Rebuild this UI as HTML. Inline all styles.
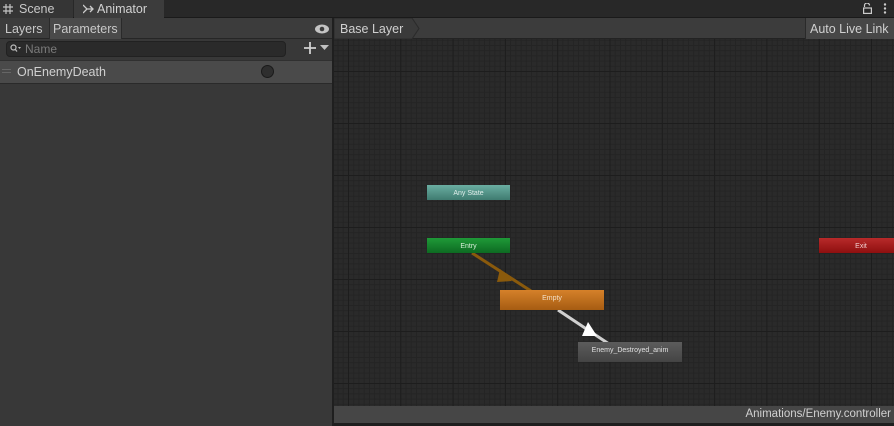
<!DOCTYPE html>
<html><head><style>
*{margin:0;padding:0;box-sizing:border-box}
body{width:894px;height:426px;background:#191919;font-family:"Liberation Sans",sans-serif;color:#c4c4c4;position:relative;overflow:hidden;font-size:12px}
.abs{position:absolute;white-space:nowrap}
</style></head><body>
<div class="abs" style="left:0;top:0;width:894px;height:18px;background:#282828;border-bottom:1px solid #1a1a1a"></div>
<div class="abs" style="left:0;top:0;width:73px;height:18px;background:#353535;"></div>
<svg class="abs" style="left:3px;top:4px" width="10" height="10"><path d="M3 0V10M7 0V10M0 3H10M0 7H10" stroke="#c4c4c4" stroke-width="1.2"/></svg>
<div class="abs" style="left:19px;top:2px;font-size:12.5px;color:#c8c8c8">Scene</div>
<div class="abs" style="left:74px;top:0;width:90px;height:18px;background:#3c3c3c"></div>
<svg class="abs" style="left:83px;top:4px" width="11" height="10"><path d="M0 1L4 5L0 9M4 5H10M7 2L10 5L7 8" stroke="#ccc" stroke-width="1.3" fill="none"/></svg>
<div class="abs" style="left:97px;top:2px;font-size:12.5px;color:#d2d2d2">Animator</div>
<svg class="abs" style="left:863px;top:3px" width="9" height="11"><path d="M1.5 4V2.5A2.5 2.5 0 0 1 6.5 2.5" stroke="#ccc" stroke-width="1.2" fill="none"/><rect x="0.6" y="5" width="7.8" height="5.4" stroke="#ccc" stroke-width="1.2" fill="none"/></svg>
<svg class="abs" style="left:883px;top:3px" width="4" height="12"><circle cx="2" cy="1.5" r="1.2" fill="#ccc"/><circle cx="2" cy="5.5" r="1.2" fill="#ccc"/><circle cx="2" cy="9.5" r="1.2" fill="#ccc"/></svg>
<div class="abs" style="left:0;top:18px;width:333px;height:408px;background:#383838"></div>
<div class="abs" style="left:0;top:18px;width:333px;height:21px;background:#3c3c3c;border-bottom:1px solid #262626"></div>
<div class="abs" style="left:5px;top:22px;font-size:12.5px;color:#c8c8c8">Layers</div>
<div class="abs" style="left:49px;top:18px;width:73px;height:21px;background:#4a4a4a;border-left:1px solid #2a2a2a;border-right:1px solid #2a2a2a"></div>
<div class="abs" style="left:53px;top:22px;font-size:12.5px;color:#c8c8c8">Parameters</div>
<svg class="abs" style="left:314px;top:23px" width="16" height="12"><ellipse cx="8" cy="6" rx="7" ry="4.5" fill="#c4c4c4"/><circle cx="8" cy="6" r="2.3" fill="#3c3c3c"/></svg>
<div class="abs" style="left:6px;top:41px;width:280px;height:16px;background:#2a2a2a;border:1px solid #212121;border-radius:4px"></div>
<svg class="abs" style="left:10px;top:44px" width="12" height="9"><circle cx="3.5" cy="3.5" r="2.5" stroke="#bbb" stroke-width="1.2" fill="none"/><path d="M5 5L7 7.5" stroke="#bbb" stroke-width="1.3"/><path d="M8 3H11L9.5 5Z" fill="#bbb"/></svg>
<div class="abs" style="left:25px;top:42px;font-size:12px;color:#7a7a7a">Name</div>
<svg class="abs" style="left:304px;top:42px" width="12" height="12"><path d="M6 0V12M0 6H12" stroke="#d0d0d0" stroke-width="1.8"/></svg>
<svg class="abs" style="left:320px;top:45px" width="9" height="6"><path d="M0 0H9L4.5 5Z" fill="#c0c0c0"/></svg>
<div class="abs" style="left:0;top:60px;width:333px;height:24px;background:#4a4a4a;border-top:1px solid #303030;border-bottom:1px solid #2a2a2a"></div>
<div class="abs" style="left:2px;top:69px;width:9px;height:1px;background:#666"></div>
<div class="abs" style="left:2px;top:72px;width:9px;height:1px;background:#666"></div>
<div class="abs" style="left:17px;top:65px;font-size:12.5px;color:#d0d0d0">OnEnemyDeath</div>
<div class="abs" style="left:261px;top:65px;width:13px;height:13px;border-radius:50%;background:#2e2e2e;border:1px solid #1a1a1a"></div>
<div class="abs" style="left:332px;top:18px;width:2px;height:408px;background:#1f1f1f"></div>
<div class="abs" style="left:334px;top:18px;width:560px;height:21px;background:#3c3c3c;border-bottom:1px solid #232323"></div>
<svg class="abs" style="left:334px;top:18px" width="90" height="21"><polygon points="0,0 78,0 85,10.5 78,21 0,21" fill="#3a3a3a" stroke="#2a2a2a"/></svg>
<div class="abs" style="left:340px;top:22px;font-size:12.5px;color:#d0d0d0">Base Layer</div>
<div class="abs" style="left:805px;top:18px;width:89px;height:21px;background:#474747;border-left:1px solid #2a2a2a"></div>
<div class="abs" style="left:810px;top:22px;font-size:12.5px;color:#d0d0d0">Auto Live Link</div>
<svg class="abs" style="left:334px;top:39px" width="560" height="367">
<defs>
<pattern id="mn" width="5.23" height="5.2" patternUnits="userSpaceOnUse" x="14" y="32"><path d="M0 0.5H5.23M0.5 0V5.2" stroke="#242424" stroke-width="1" fill="none"/></pattern>
<pattern id="mj" width="52.3" height="52" patternUnits="userSpaceOnUse" x="14" y="32"><path d="M0 0.5H52.3M0.5 0V52" stroke="#1d1d1d" stroke-width="1" fill="none"/></pattern>
<linearGradient id="g1" x1="0" y1="0" x2="0" y2="1"><stop offset="0" stop-color="#6aaea2"/><stop offset="1" stop-color="#3f7b70"/></linearGradient>
<linearGradient id="g2" x1="0" y1="0" x2="0" y2="1"><stop offset="0" stop-color="#1f9a38"/><stop offset="1" stop-color="#0d6a22"/></linearGradient>
<linearGradient id="g3" x1="0" y1="0" x2="0" y2="1"><stop offset="0" stop-color="#d5812a"/><stop offset="1" stop-color="#a65c12"/></linearGradient>
<linearGradient id="g4" x1="0" y1="0" x2="0" y2="1"><stop offset="0" stop-color="#b82a2a"/><stop offset="1" stop-color="#8e0f0f"/></linearGradient>
<linearGradient id="g5" x1="0" y1="0" x2="0" y2="1"><stop offset="0" stop-color="#5c5c5c"/><stop offset="1" stop-color="#444"/></linearGradient>
</defs>
<rect width="560" height="367" fill="#2a2a2a"/>
<rect width="560" height="367" fill="url(#mn)"/>
<rect width="560" height="367" fill="url(#mj)"/>
<line x1="138" y1="214" x2="197" y2="252" stroke="#8a5a0c" stroke-width="3"/>
<polygon points="166,230 178,242 163,243" fill="#8a5a0c"/>
<line x1="224" y1="271" x2="275" y2="305" stroke="#d0d0d0" stroke-width="3"/>
<polygon points="254,283 263,297 248,297" fill="#fff"/>
<rect x="93" y="146" width="83" height="15" fill="url(#g1)"/>
<text x="134.5" y="156" font-size="7" fill="#e0eeea" text-anchor="middle" font-family="Liberation Sans">Any State</text>
<rect x="93" y="199" width="83" height="15" fill="url(#g2)"/>
<text x="134.5" y="209" font-size="7" fill="#d8efd8" text-anchor="middle" font-family="Liberation Sans">Entry</text>
<rect x="166" y="251" width="104" height="20" fill="url(#g3)"/>
<text x="218" y="261" font-size="7" fill="#f4e0c8" text-anchor="middle" font-family="Liberation Sans">Empty</text>
<rect x="244" y="303" width="104" height="20" fill="url(#g5)"/>
<text x="296" y="313" font-size="7" fill="#e0e0e0" text-anchor="middle" font-family="Liberation Sans">Enemy_Destroyed_anim</text>
<rect x="485" y="199" width="80" height="15" fill="url(#g4)"/>
<text x="527" y="209" font-size="7" fill="#f0d0d0" text-anchor="middle" font-family="Liberation Sans">Exit</text>
</svg>
<div class="abs" style="left:334px;top:406px;width:560px;height:17px;background:#464646"></div>
<div class="abs" style="right:3px;top:408px;font-size:11.5px;color:#d0d0d0">Animations/Enemy.controller</div>
<div class="abs" style="left:334px;top:423px;width:560px;height:3px;background:#1e1e1e"></div>
</body></html>
